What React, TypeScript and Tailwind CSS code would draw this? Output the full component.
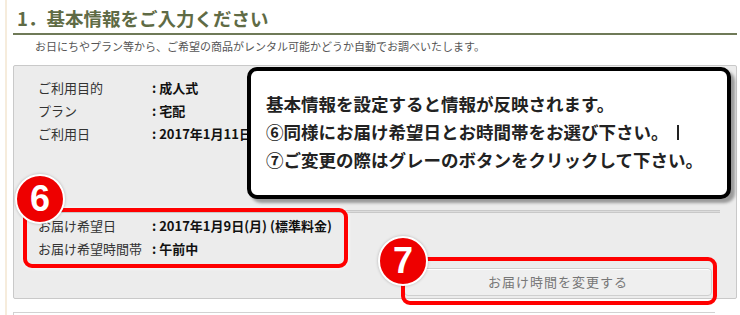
import React from 'react';

const jp = { fontFamily: '"Noto Sans CJK JP", "Noto Sans", sans-serif' };

const Row = ({ label, value }: { label: string; value: string }) => (
    <div className="flex items-center h-[23px] text-[13px]">
        <span className="w-[114px] text-[#333]">{label}</span>
        <span className="font-bold text-[#111]">: {value}</span>
    </div>
);

const Badge = ({ n }: { n: string }) => (
    <div className="w-[50px] h-[50px] rounded-full bg-[#ee0000] border-2 border-white shadow-[0_0_3px_rgba(0,0,0,0.25)] flex items-center justify-center text-white text-[36px] font-bold leading-none" style={{ fontFamily: '"Liberation Sans", Arial, sans-serif' }}>
        {n}
    </div>
);

export default function App() {
    return (
        <div className="w-[740px] h-[315px] bg-white relative overflow-hidden" style={jp}>
            {/* faint left edge */}
            <div className="absolute left-[5px] top-0 w-[2px] h-full bg-[#f6ecdc]"></div>

            <div className="pl-[13px] pr-[3px]">
                {/* Heading */}
                <h1 className="pl-[4px] pt-[5px] h-[33px] text-[18.5px] font-bold text-[#5f6b45] leading-[26px]">
                    1．基本情報をご入力ください
                </h1>
                <div className="h-[2px] bg-[#6f7a58]"></div>
                <p className="pl-[22px] pt-[3px] text-[11px] text-[#555] leading-[16px]">
                    お日にちやプラン等から、ご希望の商品がレンタル可能かどうか自動でお調べいたします。
                </p>

                {/* Info panel */}
                <div className="relative mt-[11px] h-[234px] bg-[#ececec] border border-[#c9c9c9] rounded-[2px]">
                    <div className="pl-[24px] pt-[10px]">
                        <Row label="ご利用目的" value="成人式" />
                        <Row label="プラン" value="宅配" />
                        <Row label="ご利用日" value="2017年1月11日(水)" />
                    </div>

                    <div className="mx-[16px] mt-[65px] h-[3px] border-t border-b border-[#c8c8c8] bg-[#dcdcdc]"></div>

                    <div className="pl-[24px] pt-[1px]">
                        <Row label="お届け希望日" value="2017年1月9日(月) (標準料金)" />
                        <Row label="お届け希望時間帯" value="午前中" />
                    </div>

                    <div className="flex justify-end pr-[24px] pt-[8px]">
                        <button className="w-[308px] h-[28px] rounded-[4px] border border-[#cfcfcf] bg-[#efefef] shadow-[inset_0_1px_0_#fff] text-[13px] text-[#777] tracking-[1px]">
                            お届け時間を変更する
                        </button>
                    </div>
                </div>
            </div>

            {/* next panel edge */}
            <div className="absolute left-[13px] top-[312px] w-[702px] h-[4px] border-t border-l border-[#d2d2d2]"></div>

            {/* Annotation: callout */}
            <div className="absolute left-[247px] top-[67px] w-[484px] h-[132px] bg-white border-[4px] border-black rounded-[10px] shadow-[4px_4px_3px_rgba(0,0,0,0.35)] pl-[15px] pt-[19px] text-[17.5px] font-bold text-[#222] leading-[28px]">
                <div>基本情報を設定すると情報が反映されます。</div>
                <div>⑥同様にお届け希望日とお時間帯をお選び下さい。<span className="inline-block ml-[8px] w-[2px] h-[15px] bg-[#222] align-[-1px]"></span></div>
                <div>⑦ご変更の際はグレーのボタンをクリックして下さい。</div>
            </div>

            {/* Annotation: 6 */}
            <div className="absolute left-[23px] top-[208px] w-[325px] h-[60px] border-[4px] border-[#ff0000] rounded-[9px] shadow-[0_0_4px_rgba(255,255,255,0.9)]"></div>
            <div className="absolute left-[15px] top-[174px]">
                <Badge n="6" />
            </div>

            {/* Annotation: 7 */}
            <div className="absolute left-[401px] top-[257px] w-[316px] h-[48px] border-[4px] border-[#ff0000] rounded-[9px]"></div>
            <div className="absolute left-[378px] top-[236px]">
                <Badge n="7" />
            </div>
        </div>
    );
}
